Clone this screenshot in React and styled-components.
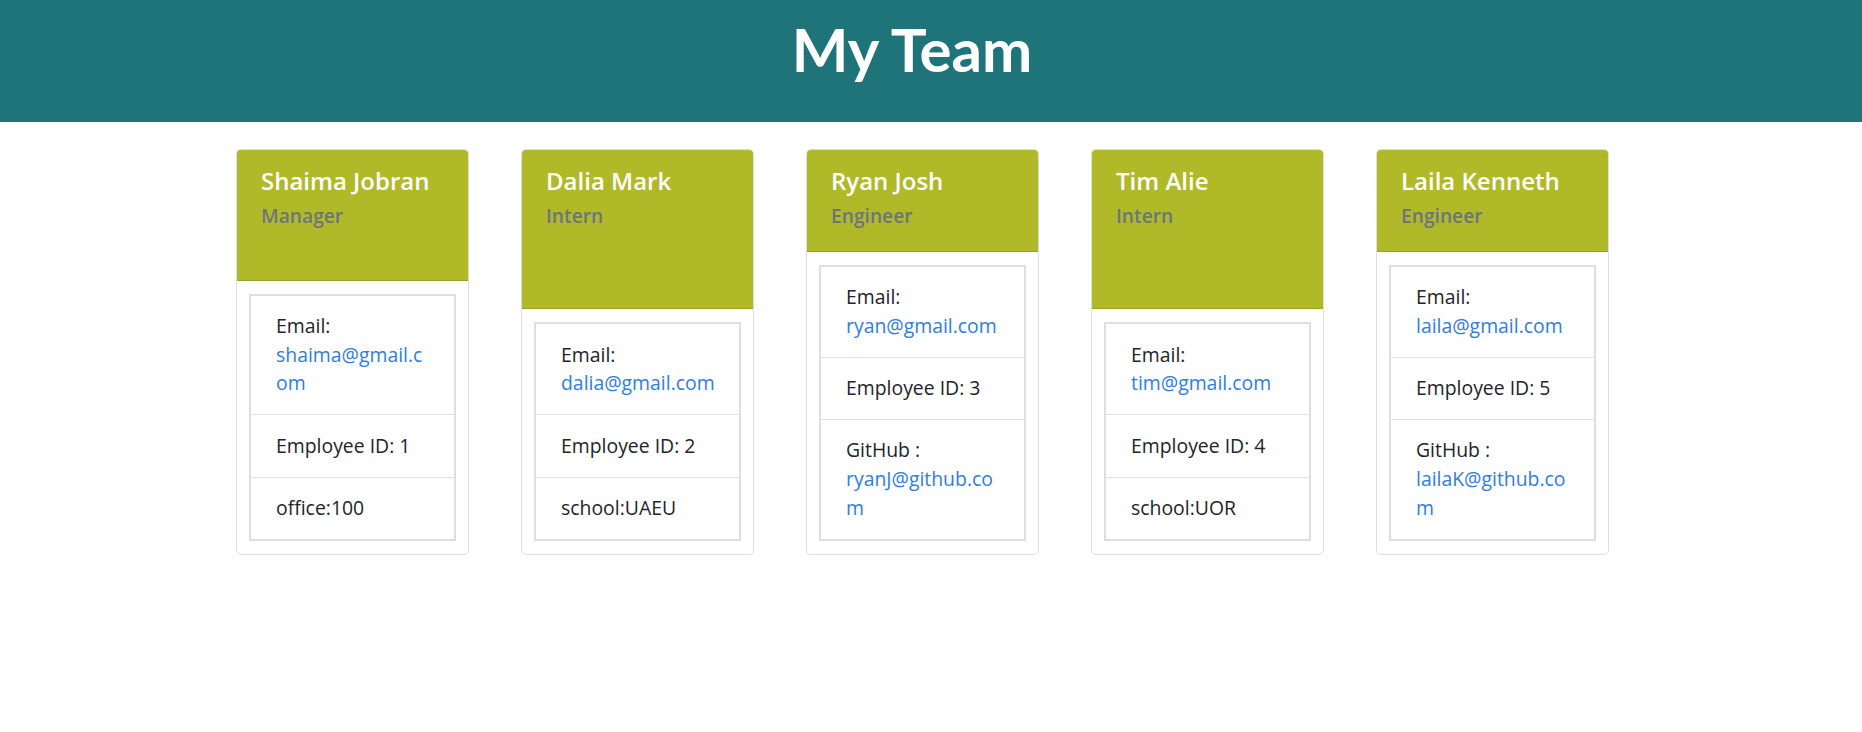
import styled, { createGlobalStyle } from "styled-components";

const team = [
  { name: "Shaima Jobran", role: "Manager", email: "shaima@gmail.com", id: 1, extra: { label: "office:", value: "100" } },
  { name: "Dalia Mark", role: "Intern", email: "dalia@gmail.com", id: 2, extra: { label: "school:", value: "UAEU" } },
  { name: "Ryan Josh", role: "Engineer", email: "ryan@gmail.com", id: 3, extra: { label: "GitHub : ", link: "ryanJ@github.com" } },
  { name: "Tim Alie", role: "Intern", email: "tim@gmail.com", id: 4, extra: { label: "school:", value: "UOR" } },
  { name: "Laila Kenneth", role: "Engineer", email: "laila@gmail.com", id: 5, extra: { label: "GitHub : ", link: "lailaK@github.com" } },
];

const App = () => {
  return (
    <>
      <GlobalStyle />
      <Header>
        <Title>My Team</Title>
      </Header>
      <CardRow>
        {team.map((member) => (
          <Card key={member.id}>
            <CardHeader>
              <Name>{member.name}</Name>
              <Role>{member.role}</Role>
            </CardHeader>
            <CardBody>
              <InfoList>
                <InfoItem>
                  Email: <Link href={`mailto:${member.email}`}>{member.email}</Link>
                </InfoItem>
                <InfoItem>Employee ID: {member.id}</InfoItem>
                <InfoItem>
                  {member.extra.label}
                  {member.extra.link ? (
                    <Link href="#">{member.extra.link}</Link>
                  ) : (
                    member.extra.value
                  )}
                </InfoItem>
              </InfoList>
            </CardBody>
          </Card>
        ))}
      </CardRow>
    </>
  );
};

export default App;

const GlobalStyle = createGlobalStyle`
  * {
    box-sizing: border-box;
  }
  body {
    margin: 0;
    background: #fff;
    color: #212529;
    font-family: "Open Sans", "Noto Sans", sans-serif;
  }
`;

const Header = styled.header`
  height: 122px;
  background-color: #1f747a;
  text-align: center;
  padding: 13px 38px 0 0;
`;

const Title = styled.h1`
  margin: 0;
  color: #fff;
  font-family: Lato, "Open Sans", sans-serif;
  font-weight: 700;
  font-size: 60px;
  line-height: 1.2;
`;

const CardRow = styled.main`
  display: flex;
  justify-content: center;
  align-items: stretch;
  gap: 52px;
  padding: 27px 17px 0 0;
`;

const Card = styled.section`
  width: 233px;
  display: flex;
  flex-direction: column;
  border: 1px solid rgba(0, 0, 0, 0.125);
  border-radius: 5px;
  background: #fff;
  word-wrap: break-word;
  overflow-wrap: break-word;
`;

const CardHeader = styled.div`
  flex: 1;
  background-color: #b0b928;
  border-radius: 4px 4px 0 0;
  border-bottom: 1px solid rgba(0, 0, 0, 0.125);
  padding: 17px 22px 24px 24px;
`;

const Name = styled.h2`
  margin: 0 0 8px;
  color: #fff;
  font-size: 24px;
  font-weight: 600;
  line-height: 1.2;
`;

const Role = styled.h3`
  margin: 0;
  color: #6c757d;
  font-size: 19.2px;
  font-weight: 600;
  line-height: 1.2;
`;

const CardBody = styled.div`
  padding: 13px 12px;
`;

const InfoList = styled.ul`
  list-style: none;
  margin: 0;
  padding: 0;
  border: 2px solid #dedede;
`;

const InfoItem = styled.li`
  padding: 16.2px 22px 16.2px 25px;
  font-size: 19.4px;
  line-height: 28.8px;
  & + & {
    border-top: 1px solid #e2e2e2;
  }
`;

const Link = styled.a`
  color: #2f7de1;
  text-decoration: none;
`;
